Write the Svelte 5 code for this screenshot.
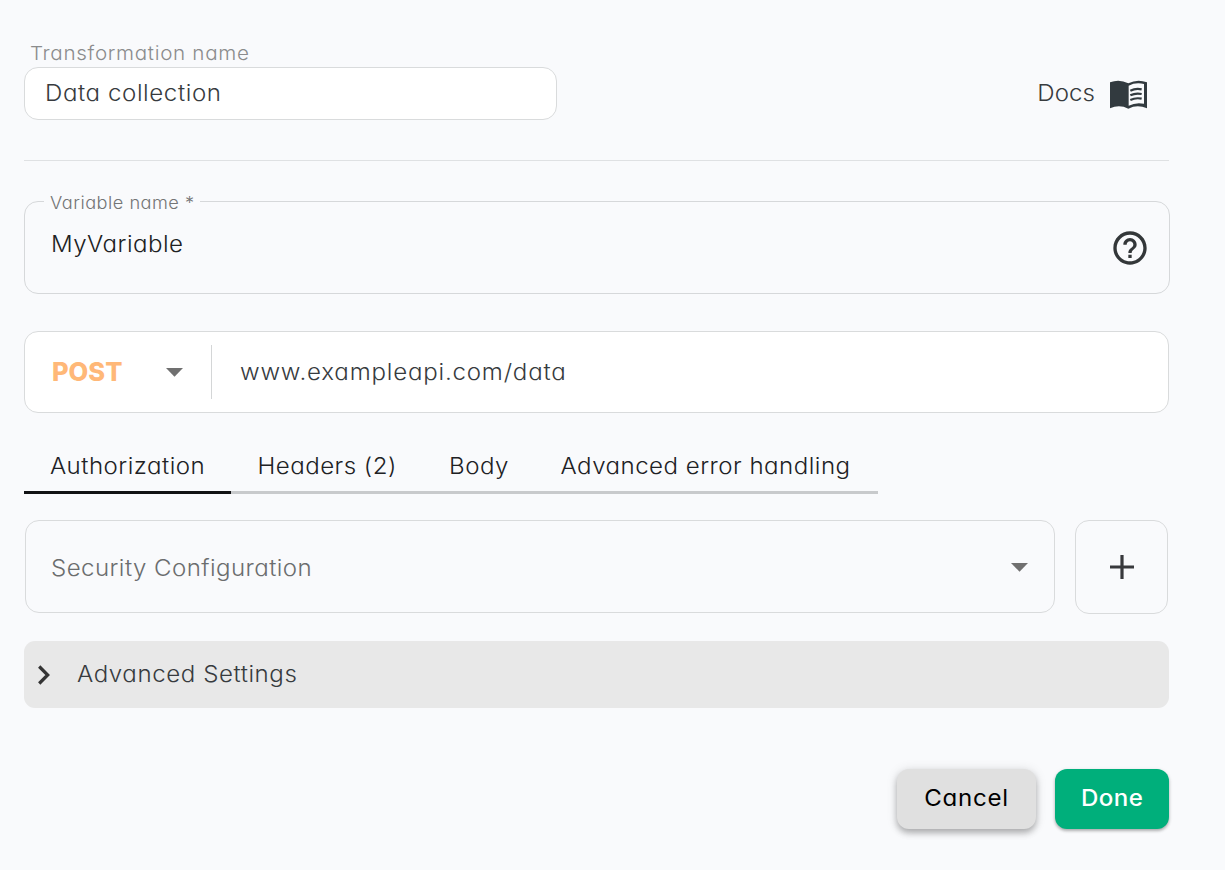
<script>
  let active = $state(0);
  const tabs = [
    { label: 'Authorization', width: 207 },
    { label: 'Headers (2)', width: 192 },
    { label: 'Body', width: 111 },
    { label: 'Advanced error handling', width: 344 },
  ];
</script>

<main>
  <header>
    <div class="name">
      <span class="label wide">Transformation name</span>
      <div class="name-box"><span class="wide">Data collection</span></div>
    </div>
    <div class="docs">
      <span class="wide end">Docs</span>
      <svg width="37" height="29" viewBox="270 60 111 87" fill="none">
        <path fill="#323a3f" d="M270 67Q298 56 325 70Q352 56 381 67V145Q352 132 325 146Q298 132 270 145Z" />
        <path fill="#f9fafc" d="M326 77Q347 66 372 72V131Q347 126 326 137Z" />
        <path stroke="#323a3f" stroke-width="6.500" d="M331 92Q347 84 365 88M331 106Q347 98 365 102M331 120Q347 112 365 116" />
      </svg>
    </div>
  </header>

  <section class="variable">
    <span class="legend"><span class="wide">Variable name *</span></span>
    <span class="value wide">MyVariable</span>
    <svg width="40" height="40" viewBox="0 0 24 24" fill="#333739">
      <path d="M11 18h2v-2h-2v2zm1-16C6.480 2 2 6.480 2 12s4.480 10 10 10 10-4.480 10-10S17.520 2 12 2zm0 18c-4.410 0-8-3.590-8-8s3.590-8 8-8 8 3.590 8 8-3.590 8-8 8zm0-14c-2.210 0-4 1.790-4 4h2c0-1.100.9-2 2-2s2 .9 2 2c0 2-3 1.750-3 5h2c0-2.250 3-2.500 3-5 0-2.210-1.790-4-4-4z" />
    </svg>
  </section>

  <section class="request">
    <div class="method">
      <span>POST</span>
      <svg width="17" height="9" viewBox="0 0 17 9"><path fill="#707070" d="M0 0H17L8.500 8.700Z" /></svg>
    </div>
    <span class="url wide">www.exampleapi.com/data</span>
  </section>

  <nav>
    {#each tabs as tab, i}
      <button class:active={active === i} style:width="{tab.width}px" onclick={() => (active = i)}><span class="wide mid">{tab.label}</span></button>
    {/each}
  </nav>

  <div class="security">
    <div class="select">
      <span class="wide">Security Configuration</span>
      <svg width="17" height="9" viewBox="0 0 17 9"><path fill="#707070" d="M0 0H17L8.500 8.700Z" /></svg>
    </div>
    <button class="add" aria-label="Add">
      <svg width="24" height="24" viewBox="0 0 24 24"><path stroke="#38393c" stroke-width="3.200" d="M0 12H24M12 0V24" /></svg>
    </button>
  </div>

  <div class="advanced">
    <svg width="12" height="20" viewBox="0 0 12 20"><path fill="none" stroke="#343434" stroke-width="3.200" d="M1.200 1.500L9.700 10L1.200 18.500" /></svg>
    <span class="wide">Advanced Settings</span>
  </div>

  <footer>
    <button class="cancel"><span class="wide mid">Cancel</span></button>
    <button class="done"><span class="wide mid">Done</span></button>
  </footer>
</main>

<style>
  :global(body) { background: #f9fafc; }
  main, main * { box-sizing: border-box; }
  main {
    width: 1225px;
    height: 870px;
    padding: 40px 56px 0 24px;
    display: flex;
    flex-direction: column;
    background: #f9fafc;
    color: #373b3e;
    font-family: Inter, "Open Sans", sans-serif;
    font-feature-settings: "cv11";
    font-size: 22.500px;
    font-weight: 300;
    line-height: 28px;
    white-space: nowrap;
  }
  svg { display: block; flex: none; }
  button { border: 0; padding: 0; background: none; font: inherit; font-feature-settings: inherit; color: inherit; }
  .wide { display: inline-block; transform: scaleX(1.070); transform-origin: left; letter-spacing: .45px; }
  .wide.mid { transform-origin: center; }
  .wide.end { transform-origin: right; letter-spacing: .1px; }
  header {
    display: flex;
    justify-content: space-between;
    height: 121px;
    border-bottom: 1px solid #dfe1e3;
  }
  .name { display: flex; flex-direction: column; }
  .label { height: 27px; line-height: 27px; margin-left: 6px; font-size: 19.300px; color: #8b8c8d; }
  .label.wide { letter-spacing: .63px; }
  .name-box {
    width: 533px;
    height: 53px;
    border: 1px solid #d9dbdc;
    border-radius: 14px;
    padding: 11px 20px;
    background: #fff;
  }
  .name-box .wide { letter-spacing: .55px; }
  .docs { display: flex; gap: 15px; padding: 40px 22px 0 0; line-height: 26px; }
  .variable {
    position: relative;
    display: flex;
    justify-content: space-between;
    width: 1146px;
    height: 93px;
    margin-top: 40px;
    padding: 26px 19px 0 26px;
    border: 1px solid #d6d8da;
    border-radius: 14px;
    color: #202122;
  }
  .legend {
    position: absolute;
    left: 19px;
    top: -12px;
    width: 156px;
    height: 26px;
    line-height: 26px;
    padding-left: 6px;
    background: #f9fafc;
    color: #747576;
    font-size: 17px;
  }
  .value { line-height: 32px; height: 32px; }
  .request {
    display: flex;
    align-items: center;
    height: 82px;
    margin-top: 37px;
    border: 1px solid #d9dbdc;
    border-radius: 14px;
    background: #fff;
  }
  .method {
    display: flex;
    align-items: center;
    justify-content: space-between;
    width: 187px;
    height: 54px;
    padding: 0 28px 0 27px;
    border-right: 1px solid #d4d6d7;
    color: #ffb878;
    font-size: 25.500px;
    font-weight: 800;
  }
  .url { margin-left: 28px; }
  .url.wide { letter-spacing: .75px; }
  nav { display: flex; height: 49px; margin-top: 32px; }
  nav button { height: 49px; padding-bottom: 5px; border-bottom: 3px solid #c8cacc; color: #202124; }
  nav button.active { border-color: #111214; }
  .security { display: flex; justify-content: space-between; height: 94px; margin: 26px 1px 0; }
  .select {
    display: flex;
    align-items: center;
    justify-content: space-between;
    width: 1030px;
    height: 93px;
    padding: 2px 26px 0 25px;
    border: 1px solid #d9dbdc;
    border-radius: 14px;
    color: #6b6d6e;
  }
  .select .wide { letter-spacing: .4px; }
  .add { display: grid; place-items: center; width: 93px; border: 1px solid #d9dbdc; border-radius: 14px; }
  .advanced {
    display: flex;
    align-items: center;
    gap: 27px;
    height: 67px;
    margin-top: 27px;
    padding-left: 14px;
    border-radius: 11px;
    background: #e8e8e8;
  }
  .advanced span { padding-bottom: 2px; letter-spacing: .54px; }
  footer { display: flex; justify-content: flex-end; gap: 19px; margin-top: 61px; }
  footer button { height: 60px; border-radius: 12px; padding-bottom: 2px; }
  .cancel {
    width: 139px;
    background: #e0e0e0;
    color: #000;
    font-weight: 400;
    box-shadow: 0 4px 6px rgba(0, 0, 0, .26), 0 1px 12px rgba(0, 0, 0, .12);
  }
  .cancel .wide { letter-spacing: .7px; }
  .done {
    width: 114px;
    background: #00af7b;
    color: #fff;
    font-weight: 500;
    box-shadow: 0 2px 3px rgba(0, 0, 0, .25), 0 1px 4px rgba(0, 0, 0, .1);
  }
</style>
